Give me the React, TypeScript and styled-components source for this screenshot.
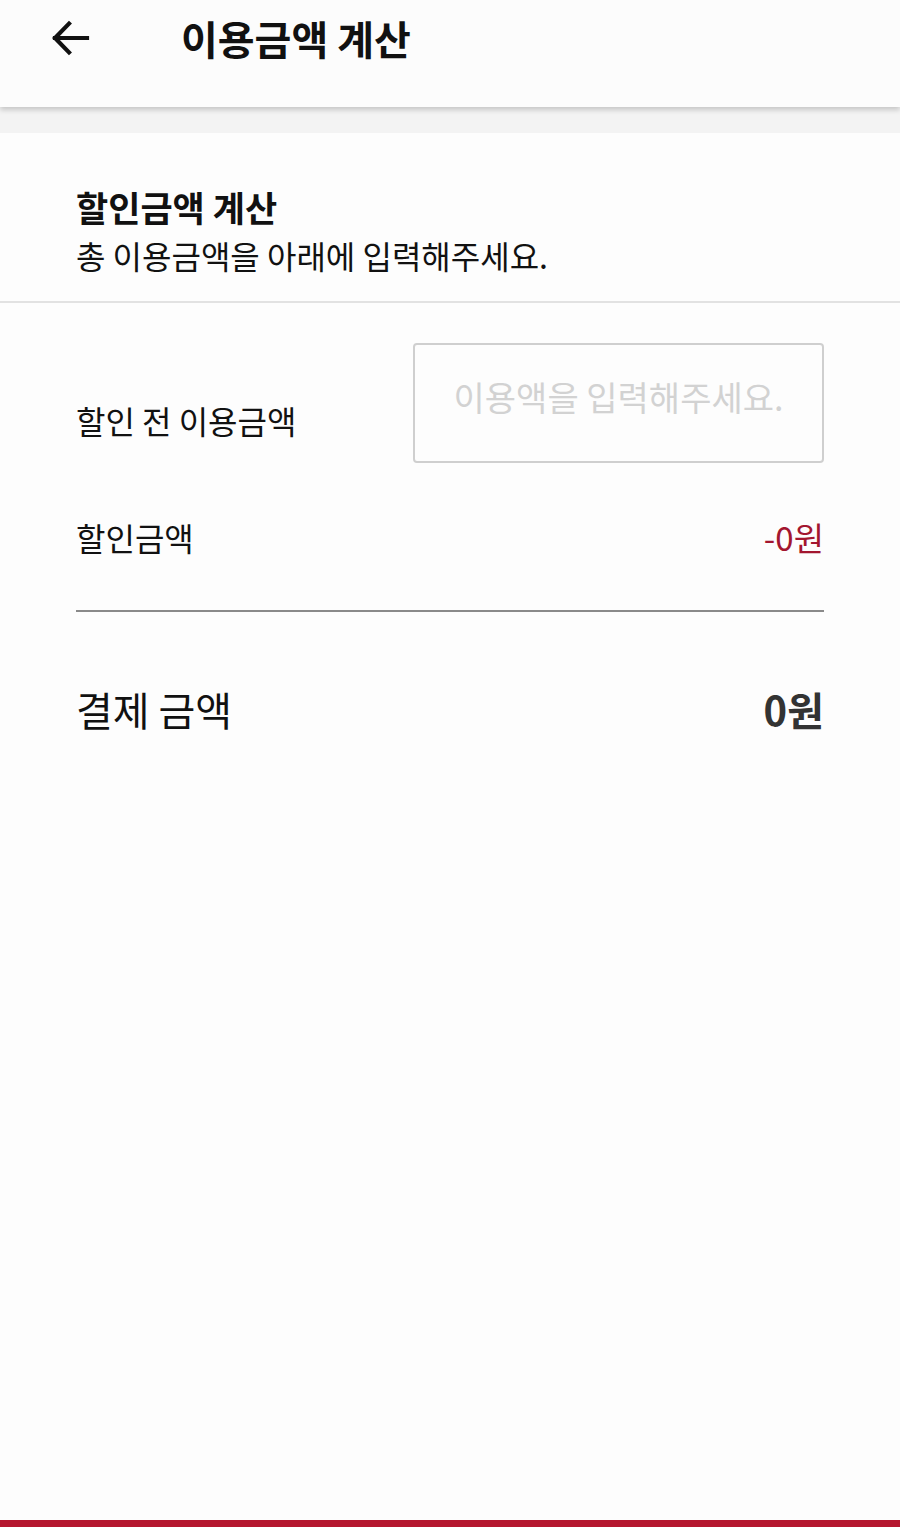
import React from "react";
import styled, { createGlobalStyle } from "styled-components";

const GlobalStyle = createGlobalStyle`
  html, body {
    margin: 0;
    padding: 0;
    background: #fdfdfd;
  }
  body {
    font-family: "Noto Sans CJK KR", "Noto Sans", sans-serif;
    color: #111;
  }
`;

const Page = styled.div`
  min-height: 1527px;
  display: flex;
  flex-direction: column;
  background: #fdfdfd;
`;

const Header = styled.header`
  height: 107px;
  display: flex;
  align-items: flex-start;
  padding: 12px 0 0 44px;
  box-sizing: border-box;
  background: #fcfcfc;
  box-shadow: 0 3px 5px rgba(0, 0, 0, 0.18);
  position: relative;
  z-index: 1;
`;

const BackButton = styled.button`
  border: none;
  background: none;
  padding: 0;
  width: 52px;
  height: 52px;
  display: flex;
  align-items: center;
  justify-content: center;
  cursor: pointer;
`;

const Title = styled.h1`
  margin: 0 0 0 85px;
  font-size: 40px;
  font-weight: 700;
  line-height: 52px;
`;

const Band = styled.div`
  height: 26px;
  background: #f3f3f3;
`;

const Intro = styled.section`
  padding: 50px 76px 23px;
  border-bottom: 2px solid #e2e2e2;
`;

const IntroTitle = styled.h2`
  margin: 0;
  font-size: 35px;
  font-weight: 700;
  line-height: 48px;
`;

const IntroText = styled.p`
  margin: 1px 0 0;
  font-size: 32px;
  line-height: 46px;
`;

const Body = styled.div`
  padding: 40px 76px 0;
  display: flex;
  flex-direction: column;
`;

const Row = styled.div<{ $height: number }>`
  display: flex;
  align-items: center;
  justify-content: space-between;
  height: ${(p) => p.$height}px;
`;

const Label = styled.span<{ $size?: number; $drop?: number }>`
  font-size: ${(p) => p.$size ?? 32}px;
  padding-top: ${(p) => p.$drop ?? 0}px;
  color: #111;
`;

const AmountInput = styled.input`
  width: 411px;
  height: 120px;
  box-sizing: border-box;
  border: 2px solid #cfcfcf;
  border-radius: 4px;
  background: #fdfdfd;
  font-family: "Noto Sans CJK KR", "Noto Sans", sans-serif;
  font-size: 34px;
  text-align: center;
  padding: 0 0 14px;
  outline: none;
  &::placeholder {
    color: #d2d2d2;
  }
`;

const Value = styled.span<{ $color: string; $bold?: boolean; $size: number }>`
  color: ${(p) => p.$color};
  font-size: ${(p) => p.$size}px;
  font-weight: ${(p) => (p.$bold ? 700 : 400)};
`;

const Divider = styled.hr`
  margin: 0;
  border: none;
  border-top: 2px solid #8a8a8a;
`;

const Spacer = styled.div`
  flex: 1;
`;

const BottomBar = styled.div`
  height: 7px;
  background: #b5172f;
`;

export default function App() {
  return (
    <Page>
      <GlobalStyle />
      <Header>
        <BackButton aria-label="뒤로">
          <svg width="48" height="48" viewBox="0 0 24 24" fill="none" stroke="#111" strokeWidth="2.1" strokeLinecap="square">
            <path d="M20.5 12H4.5" />
            <path d="M11.5 4.8L4.5 12l7 7.2" />
          </svg>
        </BackButton>
        <Title>이용금액 계산</Title>
      </Header>
      <Band />
      <Intro>
        <IntroTitle>할인금액 계산</IntroTitle>
        <IntroText>총 이용금액을 아래에 입력해주세요.</IntroText>
      </Intro>
      <Body>
        <Row $height={120}>
          <Label $drop={34}>할인 전 이용금액</Label>
          <AmountInput placeholder="이용액을 입력해주세요." />
        </Row>
        <Row $height={147}>
          <Label>할인금액</Label>
          <Value $color="#a3162f" $size={33}>-0원</Value>
        </Row>
        <Divider />
        <Row $height={194}>
          <Label $size={40}>결제 금액</Label>
          <Value $color="#333" $size={40} $bold>0원</Value>
        </Row>
      </Body>
      <Spacer />
      <BottomBar />
    </Page>
  );
}
